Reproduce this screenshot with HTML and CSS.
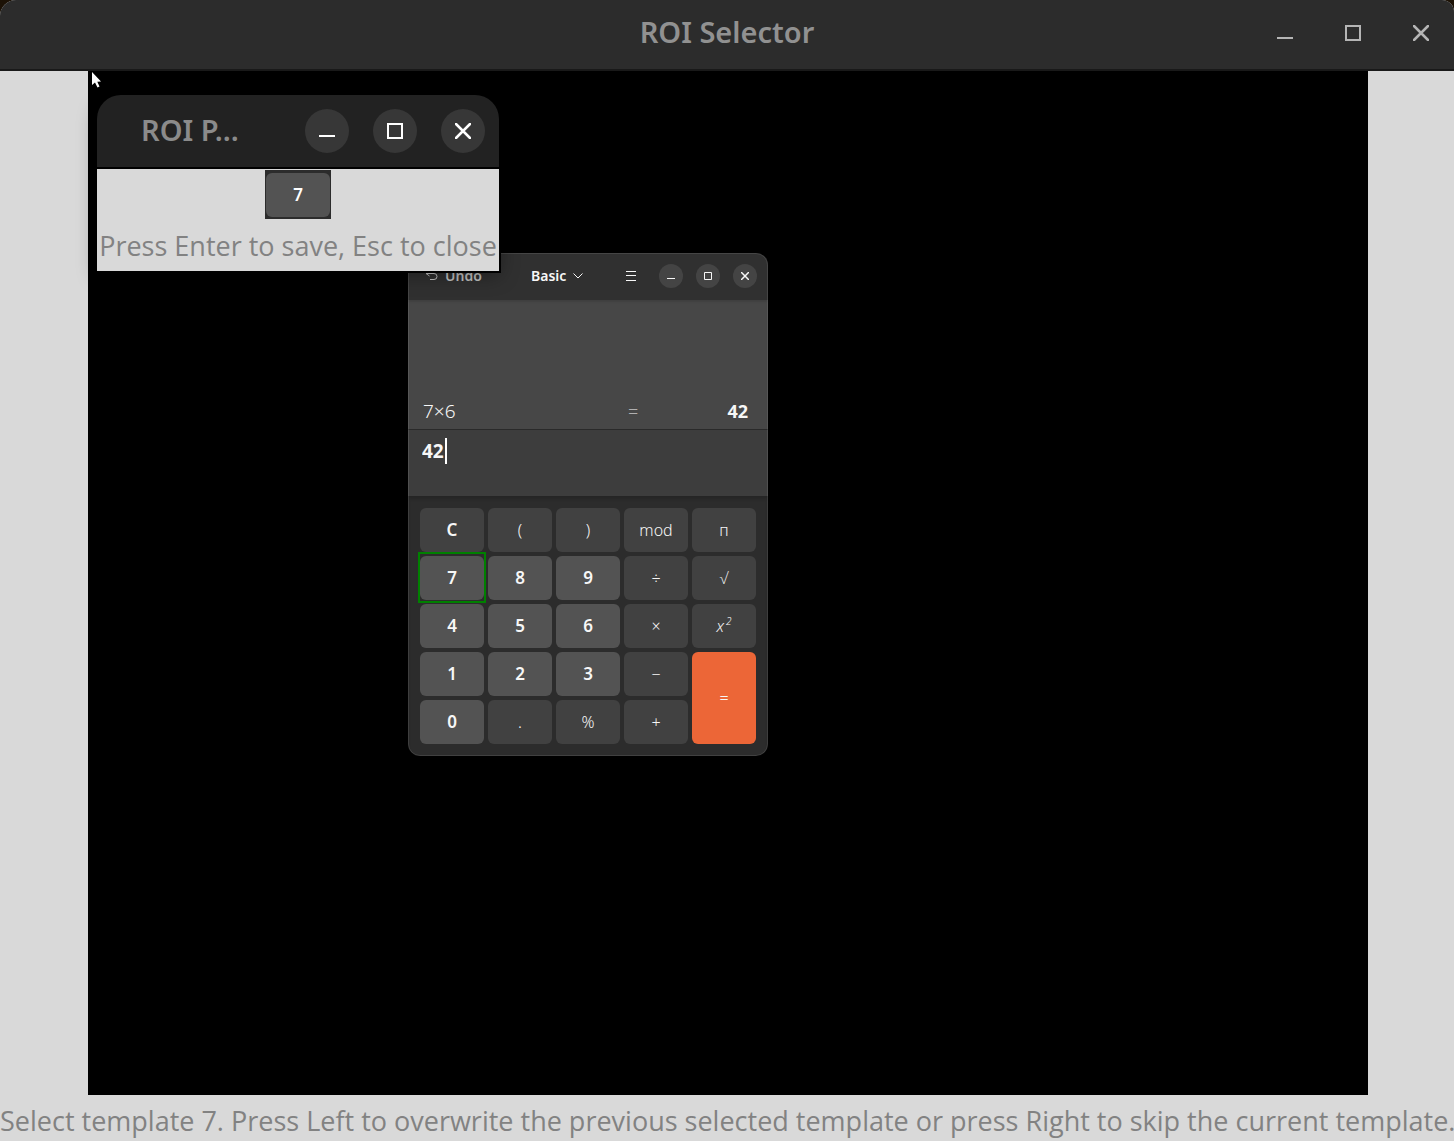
FILE: index.html
```html
<!DOCTYPE html>
<html lang="en">
<head>
<meta charset="utf-8">
<meta name="viewport" content="width=device-width, initial-scale=1">
<title>ROI Selector</title>
<link rel="stylesheet" href="styles.css">
</head>
<body>
<div class="selector">
  <header class="titlebar">
    <h1 class="titlebar-title">ROI Selector</h1>
    <div class="titlebar-controls">
      <button class="control" type="button" aria-label="Minimize"><svg width="16" height="16" viewBox="0 0 16 16"><path d="M0 13H16"/></svg></button>
      <button class="control" type="button" aria-label="Maximize"><svg width="16" height="16" viewBox="0 0 16 16"><path d="M1 1H15V15H1Z"/></svg></button>
      <button class="control" type="button" aria-label="Close"><svg width="16" height="16" viewBox="0 0 16 16"><path class="cross" d="M1 1L15 15M15 1L1 15"/></svg></button>
    </div>
  </header>

  <main class="viewer">
    <div class="capture">
      <section class="calculator" aria-label="Calculator">
        <header class="calc-header">
          <button class="calc-undo" type="button"><svg width="12" height="12" viewBox="0 0 12 12"><path d="M0 3.500H8A3 3 0 0 1 8 9.500H4"/><path d="M3.500 0L0 3.500L3.500 6"/></svg>Undo</button>
          <button class="calc-mode" type="button">Basic<svg width="10" height="6" viewBox="0 0 10 6"><path d="M.5 .5L5 5L9.500 .5"/></svg></button>
          <div class="calc-actions">
            <button class="calc-menu" type="button" aria-label="Menu"><svg width="10" height="10" viewBox="0 0 10 10"><path d="M0 .5H10M0 4.500H10M0 9.500H10"/></svg></button>
            <button class="calc-control" type="button" aria-label="Minimize"><svg width="8" height="8" viewBox="0 0 8 8"><path d="M0 6.500H8"/></svg></button>
            <button class="calc-control" type="button" aria-label="Maximize"><svg width="8" height="8" viewBox="0 0 8 8"><path d="M.5 .5H7.500V7.500H.5Z"/></svg></button>
            <button class="calc-control" type="button" aria-label="Close"><svg width="8" height="8" viewBox="0 0 8 8"><path class="cross-small" d="M0 0L8 8M8 0L0 8"/></svg></button>
          </div>
        </header>
        <div class="calc-history">
          <span class="calc-expression">7×6</span>
          <span class="calc-equals">=</span>
          <strong class="calc-result">42</strong>
        </div>
        <div class="calc-entry">
          <input class="calc-input" type="text" value="42" aria-label="Expression"><span class="calc-caret"></span>
        </div>
        <div class="keypad">
          <button class="key key-clear" type="button">C</button>
          <button class="key" type="button">(</button>
          <button class="key" type="button">)</button>
          <button class="key" type="button">mod</button>
          <button class="key" type="button">п</button>
          <button class="key key-digit" type="button">7</button>
          <button class="key key-digit" type="button">8</button>
          <button class="key key-digit" type="button">9</button>
          <button class="key" type="button">÷</button>
          <button class="key" type="button">√</button>
          <button class="key key-digit" type="button">4</button>
          <button class="key key-digit" type="button">5</button>
          <button class="key key-digit" type="button">6</button>
          <button class="key" type="button">×</button>
          <button class="key key-power" type="button">x<sup>2</sup></button>
          <button class="key key-digit" type="button">1</button>
          <button class="key key-digit" type="button">2</button>
          <button class="key key-digit" type="button">3</button>
          <button class="key" type="button">−</button>
          <button class="key key-solve" type="button">=</button>
          <button class="key key-digit" type="button">0</button>
          <button class="key" type="button">.</button>
          <button class="key" type="button">%</button>
          <button class="key" type="button">+</button>
        </div>
      </section>
      <div class="selection"></div>

      <section class="preview" aria-label="ROI Preview">
        <header class="preview-header">
          <h2 class="preview-title">ROI P…</h2>
          <div class="preview-controls">
            <button class="control control-round" type="button" aria-label="Minimize"><svg width="16" height="16" viewBox="0 0 16 16"><path d="M0 13H16"/></svg></button>
            <button class="control control-round" type="button" aria-label="Maximize"><svg width="16" height="16" viewBox="0 0 16 16"><path d="M1 1H15V15H1Z"/></svg></button>
            <button class="control control-round" type="button" aria-label="Close"><svg width="16" height="16" viewBox="0 0 16 16"><path class="cross" d="M1 1L15 15M15 1L1 15"/></svg></button>
          </div>
        </header>
        <div class="preview-body">
          <div class="template"><span class="template-key">7</span></div>
          <p class="hint">Press Enter to save, Esc to close</p>
        </div>
      </section>

      <svg class="pointer" width="12" height="18" viewBox="0 0 12 18"><path d="M1 1V14L4 11.500L6.500 16.500L8.500 15.500L6.300 10.800L10 10.500Z"/></svg>
    </div>
  </main>

  <footer class="hint status">Select template 7. Press Left to overwrite the previous selected template or press Right to skip the current template.</footer>
</div>
</body>
</html>
```

FILE: styles.css
```css
* {
  box-sizing: border-box;
}

body {
  margin: 0;
  background: #1c1206;
  font-family: "Noto Sans", "Open Sans", sans-serif;
}

h1, h2, p {
  margin: 0;
}

button {
  display: flex;
  align-items: center;
  justify-content: center;
  padding: 0;
  border: 0;
  background: none;
  color: inherit;
  font: inherit;
}

svg {
  display: block;
  fill: none;
  stroke: currentColor;
}

.selector {
  display: flex;
  flex-direction: column;
  min-height: 100vh;
  border-radius: 16px 12px 0 0;
  background: #d9d9d9;
}

/* Main title bar */
.titlebar {
  display: grid;
  grid-template-columns: 1fr auto 1fr;
  align-items: center;
  height: 71px;
  padding: 0 11px 4px;
  border-bottom: 2px solid #191919;
  border-radius: 16px 12px 0 0;
  background: #2c2c2c;
  color: #919191;
}

.titlebar-title,
.preview-title {
  padding-bottom: 2px;
  font-size: 29px;
  font-weight: 600;
  line-height: 40px;
}

.titlebar-title {
  grid-column: 2;
}

.titlebar-controls,
.preview-controls {
  display: flex;
  gap: 24px;
}

.titlebar-controls {
  justify-content: flex-end;
  color: #b5b5b5;
}

.control {
  width: 44px;
  height: 44px;
  border-radius: 50%;
  stroke-width: 2px;
}

.control-round {
  background: #373737;
  color: #fff;
}

.cross {
  stroke-width: 2.5px;
  stroke-linecap: round;
}

/* Captured desktop */
.viewer {
  display: flex;
  flex: 1;
  justify-content: center;
  padding-left: 2px;
}

.capture {
  position: relative;
  width: 100%;
  max-width: 1280px;
  min-height: 1024px;
  background: #000;
}

.pointer {
  position: absolute;
  top: 0;
  left: 3px;
  fill: #fff;
  stroke: none;
}

.selection {
  position: absolute;
  top: 481px;
  left: 330px;
  width: 68px;
  height: 51px;
  border: 2px solid #008000;
}

/* Calculator window */
.calculator {
  position: absolute;
  top: 182px;
  left: 320px;
  width: 360px;
  overflow: hidden;
  border-radius: 12px;
  background: #2c2c2c;
  color: #f7f7f7;
}

.calculator::after {
  content: "";
  position: absolute;
  inset: 0;
  border: 1px solid rgba(255, 255, 255, 0.1);
  border-radius: 12px;
  pointer-events: none;
}

.calc-header {
  display: grid;
  grid-template-columns: 105px auto 1fr;
  align-items: center;
  height: 47px;
  padding: 0 11px 2px 18px;
  background: #303030;
  font-size: 14px;
  font-weight: 600;
}

.calc-undo {
  justify-self: start;
  gap: 7px;
  color: #c4c4c4;
}

.calc-mode {
  gap: 7px;
}

.calc-actions {
  display: flex;
  justify-content: flex-end;
  gap: 13px;
}

.calc-menu {
  width: 30px;
}

.calc-control {
  width: 24px;
  height: 24px;
  border-radius: 50%;
  background: #444;
}

.cross-small {
  stroke-width: 1.5px;
}

.calc-history {
  display: grid;
  grid-template-columns: 205px 30px 1fr;
  align-items: end;
  height: 130px;
  padding: 0 20px 5px 15px;
  border-bottom: 1px solid #2a2a2a;
  background: #474747;
  box-shadow: inset 0 2px 2px #404040;
  font-size: 18px;
  line-height: 26px;
}

.calc-expression {
  font-size: 19px;
  font-weight: 300;
}

.calc-equals {
  color: #b0b0b0;
  font-weight: 300;
}

.calc-result {
  text-align: right;
}

.calc-entry {
  display: flex;
  align-items: flex-start;
  height: 66px;
  padding: 8px 14px;
  background: #3d3d3d;
}

.calc-input {
  width: 23px;
  height: 26px;
  padding: 0;
  border: 0;
  outline: 0;
  background: none;
  color: inherit;
  font: bold 19px/26px "Noto Sans", sans-serif;
}

.calc-caret {
  width: 2px;
  height: 26px;
  background: #fff;
}

.keypad {
  display: grid;
  grid-template-columns: repeat(5, 1fr);
  grid-auto-rows: 44px;
  gap: 4px;
  padding: 12px;
  box-shadow: inset 0 3px 3px #262626;
}

.key {
  padding-bottom: 1px;
  border-radius: 6px;
  background: #414141;
  font-size: 16px;
  font-weight: 300;
}

.key-clear,
.key-digit {
  font-size: 17px;
  font-weight: 600;
}

.key-digit {
  background: #535353;
}

.key-power {
  font-style: italic;
}

.key-power sup {
  align-self: flex-start;
  margin: 9px 0 0 2px;
  font-size: 10px;
  line-height: 16px;
}

.key-solve {
  grid-row: span 2;
  background: #ec6637;
}

/* Preview window */
.preview {
  position: absolute;
  top: 24px;
  left: 9px;
  width: 402px;
  border-radius: 24px 24px 0 0;
  background: linear-gradient(#222 72px, #d9d9d9 72px);
  box-shadow: 0 0 0 2px #000, 0 4px 20px rgba(0, 0, 0, 0.4);
}

.preview-header {
  display: flex;
  align-items: center;
  justify-content: space-between;
  height: 74px;
  padding: 0 14px 0 44px;
  border-bottom: 2px solid #000;
}

.preview-title {
  color: #8b8b8b;
}

.preview-body {
  display: flex;
  flex-direction: column;
  align-items: center;
  height: 102px;
  padding-top: 1px;
}

.template {
  display: flex;
  width: 66px;
  height: 49px;
  padding: 3px 1px 2px;
  background: #2c2c2c;
}

.template-key {
  flex: 1;
  border-radius: 6px;
  background: #535353;
  color: #fff;
  font-size: 17px;
  font-weight: 600;
  line-height: 43px;
  text-align: center;
}

.hint {
  color: #828282;
  font-family: "Open Sans", "Noto Sans", sans-serif;
  font-size: 27px;
  line-height: 40px;
  white-space: nowrap;
}

.preview-body .hint {
  padding-top: 7px;
}

.status {
  height: 46px;
  padding-top: 6px;
}
```
